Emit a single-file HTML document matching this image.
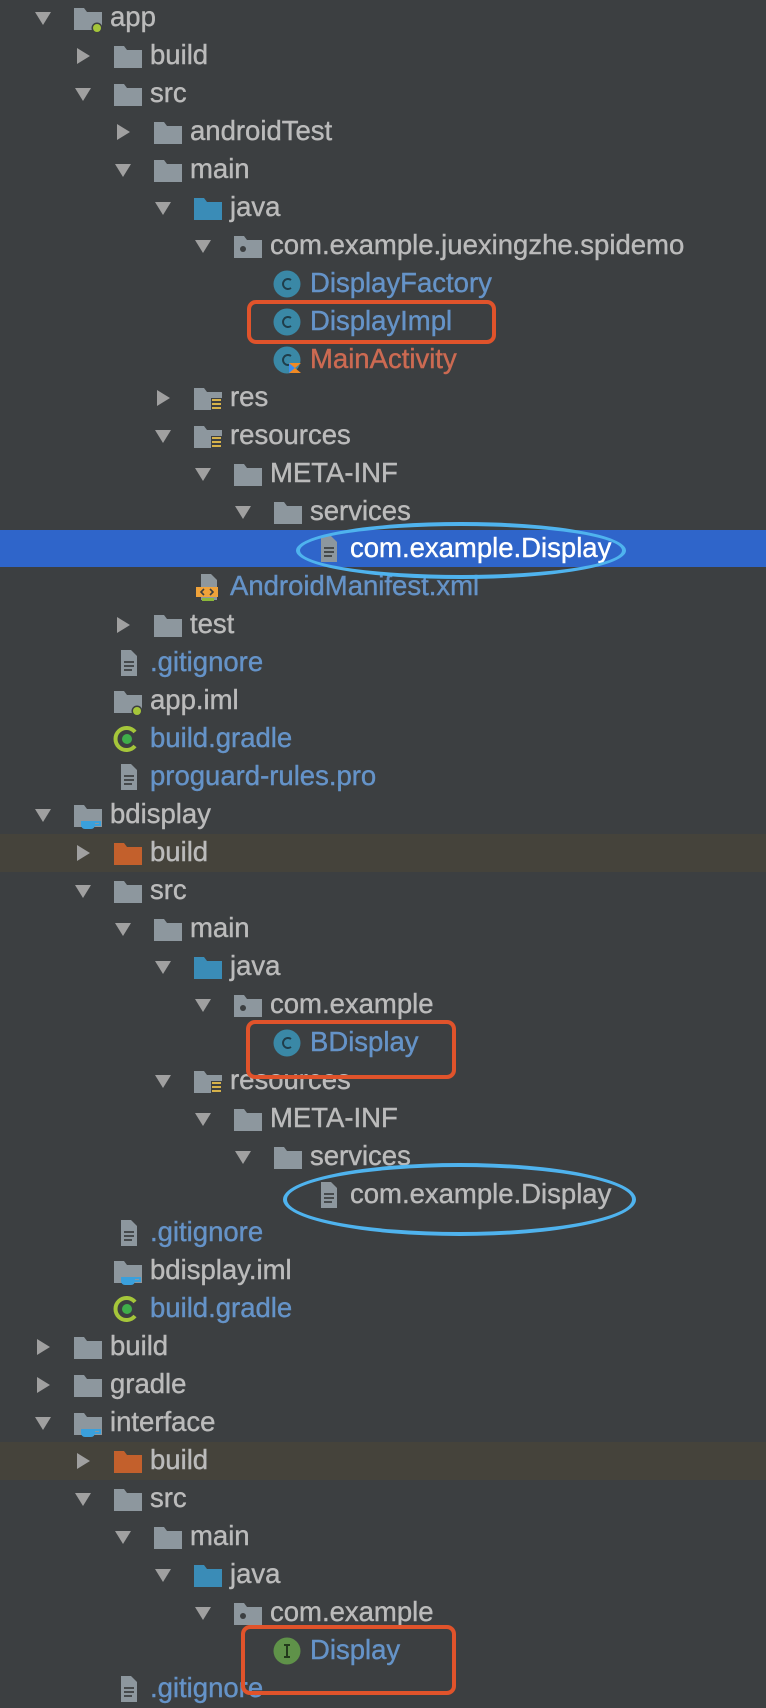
<!DOCTYPE html>
<html><head><meta charset="utf-8">
<style>
html,body{margin:0;padding:0;background:#3c3f41;}
body{width:766px;height:1678px;overflow:hidden;position:relative;font-family:"Liberation Sans",Arial,sans-serif;}
.r{position:absolute;left:0;width:766px;height:38px;}
.hl{background:#45433b;}
.sel{background:#2f65ca;}
.a{position:absolute;top:11px;width:18px;height:16px;}
.i{position:absolute;top:5px;width:30px;height:28px;}
.t{position:absolute;top:0;line-height:36px;font-size:27.5px;color:#bbbbbb;white-space:nowrap;-webkit-text-stroke:0.4px currentColor;}
.b{color:#6593c8}.rd{color:#cc6a52}.w{color:#ffffff}
.box{position:absolute;border:4px solid #e0532b;border-radius:9px;box-sizing:border-box;}
.ell{position:absolute;border:4px solid #4fb3ee;border-radius:50%;box-sizing:border-box;}
</style></head><body>
<svg width="0" height="0" style="position:absolute">
<defs>
<symbol id="dn" viewBox="0 0 18 16"><path d="M1 2h16L9 15z" fill="#a0a0a0"/></symbol>
<symbol id="rt" viewBox="0 0 18 16"><path d="M3 0v16l13-8z" fill="#a0a0a0"/></symbol>
<symbol id="fd" viewBox="0 0 30 28"><path d="M1 4h10l3 4h15v18H1z" fill="#8d979e"/></symbol>
<symbol id="fj" viewBox="0 0 30 28"><path d="M1 4h10l3 4h15v18H1z" fill="#3a8cb7"/></symbol>
<symbol id="fo" viewBox="0 0 30 28"><path d="M1 4h10l3 4h15v18H1z" fill="#c3602c"/></symbol>
<symbol id="pk" viewBox="0 0 30 28"><path d="M1 4h10l3 4h15v18H1z" fill="#8d979e"/><circle cx="10" cy="17" r="3" fill="#3c3f41"/></symbol>
<symbol id="rs" viewBox="0 0 30 28"><path d="M1 4h10l3 4h15v18H1z" fill="#8d979e"/><rect x="18" y="14" width="11" height="14" fill="#3c3f41"/><path d="M19 16h9M19 20h9M19 24h9" stroke="#d6b24a" stroke-width="2"/></symbol>
<symbol id="mg" viewBox="0 0 30 28"><path d="M1 4h10l3 4h15v18H1z" fill="#8d979e"/><circle cx="24" cy="24" r="5.5" fill="#3c3f41"/><circle cx="24" cy="24" r="4" fill="#a5c63a"/></symbol>
<symbol id="mc" viewBox="0 0 30 28"><path d="M1 4h10l3 4h15v18H1z" fill="#8d979e"/><path d="M8 20h14v4a4 4 0 0 1-4 4h-6a4 4 0 0 1-4-4z" fill="#3aa0dc"/><path d="M22 21h5v3h-5" fill="none" stroke="#3aa0dc" stroke-width="2"/></symbol>
<symbol id="fl" viewBox="0 0 30 28"><path d="M8 1h10l6 6v20H8z" fill="#8d979e"/><path d="M11 13h10M11 17h10M11 21h8" stroke="#3c3f41" stroke-width="1.8"/></symbol>
<symbol id="gr" viewBox="0 0 30 28"><path d="M22 7a11 11 0 1 0 0 14" fill="none" stroke="#a5c63a" stroke-width="4"/><circle cx="14" cy="14" r="5" fill="#3fae4a"/></symbol>
<symbol id="cl" viewBox="0 0 30 28"><circle cx="14" cy="14" r="13.5" fill="#3a88a6"/><path d="M18 10a5 5 0 1 0 0 8" fill="none" stroke="#1f3d4a" stroke-width="2"/></symbol>
<symbol id="kc" viewBox="0 0 30 28"><circle cx="14" cy="14" r="13.5" fill="#3a88a6"/><path d="M18 10a5 5 0 1 0 0 8" fill="none" stroke="#1f3d4a" stroke-width="2"/><path d="M16 17h12l-6 5 6 5H16z" fill="#f08a24"/><path d="M16 27l6-5-6-5z" fill="#3a8cf0"/></symbol>
<symbol id="if" viewBox="0 0 30 28"><circle cx="14" cy="14" r="13.5" fill="#5f9249"/><path d="M11 8h6M14 8v12M11 20h6" stroke="#233a1c" stroke-width="2"/></symbol>
<symbol id="mf" viewBox="0 0 30 28"><path d="M8 1h10l6 6v20H8z" fill="#8d979e"/><rect x="3" y="14" width="22" height="10" fill="#f0a33a"/><path d="M11 16l-3 3 3 3M17 16l3 3-3 3" stroke="#3c3f41" stroke-width="1.6" fill="none"/><path d="M9 25h12v3H9z" fill="#8cb83a"/></symbol>
</defs></svg>

<div class="r" style="top:-1px"><svg class="a" style="left:34px"><use href="#dn"/></svg><svg class="i" style="left:73px"><use href="#mg"/></svg><span class="t" style="left:110px">app</span></div>
<div class="r" style="top:37px"><svg class="a" style="left:74px"><use href="#rt"/></svg><svg class="i" style="left:113px"><use href="#fd"/></svg><span class="t" style="left:150px">build</span></div>
<div class="r" style="top:75px"><svg class="a" style="left:74px"><use href="#dn"/></svg><svg class="i" style="left:113px"><use href="#fd"/></svg><span class="t" style="left:150px">src</span></div>
<div class="r" style="top:113px"><svg class="a" style="left:114px"><use href="#rt"/></svg><svg class="i" style="left:153px"><use href="#fd"/></svg><span class="t" style="left:190px">androidTest</span></div>
<div class="r" style="top:151px"><svg class="a" style="left:114px"><use href="#dn"/></svg><svg class="i" style="left:153px"><use href="#fd"/></svg><span class="t" style="left:190px">main</span></div>
<div class="r" style="top:189px"><svg class="a" style="left:154px"><use href="#dn"/></svg><svg class="i" style="left:193px"><use href="#fj"/></svg><span class="t" style="left:230px">java</span></div>
<div class="r" style="top:227px"><svg class="a" style="left:194px"><use href="#dn"/></svg><svg class="i" style="left:233px"><use href="#pk"/></svg><span class="t" style="left:270px">com.example.juexingzhe.spidemo</span></div>
<div class="r" style="top:265px"><svg class="i" style="left:273px"><use href="#cl"/></svg><span class="t b" style="left:310px">DisplayFactory</span></div>
<div class="r" style="top:303px"><svg class="i" style="left:273px"><use href="#cl"/></svg><span class="t b" style="left:310px">DisplayImpl</span></div>
<div class="r" style="top:341px"><svg class="i" style="left:273px"><use href="#kc"/></svg><span class="t rd" style="left:310px">MainActivity</span></div>
<div class="r" style="top:379px"><svg class="a" style="left:154px"><use href="#rt"/></svg><svg class="i" style="left:193px"><use href="#rs"/></svg><span class="t" style="left:230px">res</span></div>
<div class="r" style="top:417px"><svg class="a" style="left:154px"><use href="#dn"/></svg><svg class="i" style="left:193px"><use href="#rs"/></svg><span class="t" style="left:230px">resources</span></div>
<div class="r" style="top:455px"><svg class="a" style="left:194px"><use href="#dn"/></svg><svg class="i" style="left:233px"><use href="#fd"/></svg><span class="t" style="left:270px">META-INF</span></div>
<div class="r" style="top:493px"><svg class="a" style="left:234px"><use href="#dn"/></svg><svg class="i" style="left:273px"><use href="#fd"/></svg><span class="t" style="left:310px">services</span></div>
<div class="r sel" style="top:530px;height:37px"><svg class="i" style="left:313px"><use href="#fl"/></svg><span class="t w" style="left:350px">com.example.Display</span></div>
<div class="r" style="top:568px"><svg class="i" style="left:193px"><use href="#mf"/></svg><span class="t b" style="left:230px">AndroidManifest.xml</span></div>
<div class="r" style="top:606px"><svg class="a" style="left:114px"><use href="#rt"/></svg><svg class="i" style="left:153px"><use href="#fd"/></svg><span class="t" style="left:190px">test</span></div>
<div class="r" style="top:644px"><svg class="i" style="left:113px"><use href="#fl"/></svg><span class="t b" style="left:150px">.gitignore</span></div>
<div class="r" style="top:682px"><svg class="i" style="left:113px"><use href="#mg"/></svg><span class="t" style="left:150px">app.iml</span></div>
<div class="r" style="top:720px"><svg class="i" style="left:113px"><use href="#gr"/></svg><span class="t b" style="left:150px">build.gradle</span></div>
<div class="r" style="top:758px"><svg class="i" style="left:113px"><use href="#fl"/></svg><span class="t b" style="left:150px">proguard-rules.pro</span></div>
<div class="r" style="top:796px"><svg class="a" style="left:34px"><use href="#dn"/></svg><svg class="i" style="left:73px"><use href="#mc"/></svg><span class="t" style="left:110px">bdisplay</span></div>
<div class="r hl" style="top:834px"><svg class="a" style="left:74px"><use href="#rt"/></svg><svg class="i" style="left:113px"><use href="#fo"/></svg><span class="t" style="left:150px">build</span></div>
<div class="r" style="top:872px"><svg class="a" style="left:74px"><use href="#dn"/></svg><svg class="i" style="left:113px"><use href="#fd"/></svg><span class="t" style="left:150px">src</span></div>
<div class="r" style="top:910px"><svg class="a" style="left:114px"><use href="#dn"/></svg><svg class="i" style="left:153px"><use href="#fd"/></svg><span class="t" style="left:190px">main</span></div>
<div class="r" style="top:948px"><svg class="a" style="left:154px"><use href="#dn"/></svg><svg class="i" style="left:193px"><use href="#fj"/></svg><span class="t" style="left:230px">java</span></div>
<div class="r" style="top:986px"><svg class="a" style="left:194px"><use href="#dn"/></svg><svg class="i" style="left:233px"><use href="#pk"/></svg><span class="t" style="left:270px">com.example</span></div>
<div class="r" style="top:1024px"><svg class="i" style="left:273px"><use href="#cl"/></svg><span class="t b" style="left:310px">BDisplay</span></div>
<div class="r" style="top:1062px"><svg class="a" style="left:154px"><use href="#dn"/></svg><svg class="i" style="left:193px"><use href="#rs"/></svg><span class="t" style="left:230px">resources</span></div>
<div class="r" style="top:1100px"><svg class="a" style="left:194px"><use href="#dn"/></svg><svg class="i" style="left:233px"><use href="#fd"/></svg><span class="t" style="left:270px">META-INF</span></div>
<div class="r" style="top:1138px"><svg class="a" style="left:234px"><use href="#dn"/></svg><svg class="i" style="left:273px"><use href="#fd"/></svg><span class="t" style="left:310px">services</span></div>
<div class="r" style="top:1176px"><svg class="i" style="left:313px"><use href="#fl"/></svg><span class="t" style="left:350px">com.example.Display</span></div>
<div class="r" style="top:1214px"><svg class="i" style="left:113px"><use href="#fl"/></svg><span class="t b" style="left:150px">.gitignore</span></div>
<div class="r" style="top:1252px"><svg class="i" style="left:113px"><use href="#mc"/></svg><span class="t" style="left:150px">bdisplay.iml</span></div>
<div class="r" style="top:1290px"><svg class="i" style="left:113px"><use href="#gr"/></svg><span class="t b" style="left:150px">build.gradle</span></div>
<div class="r" style="top:1328px"><svg class="a" style="left:34px"><use href="#rt"/></svg><svg class="i" style="left:73px"><use href="#fd"/></svg><span class="t" style="left:110px">build</span></div>
<div class="r" style="top:1366px"><svg class="a" style="left:34px"><use href="#rt"/></svg><svg class="i" style="left:73px"><use href="#fd"/></svg><span class="t" style="left:110px">gradle</span></div>
<div class="r" style="top:1404px"><svg class="a" style="left:34px"><use href="#dn"/></svg><svg class="i" style="left:73px"><use href="#mc"/></svg><span class="t" style="left:110px">interface</span></div>
<div class="r hl" style="top:1442px"><svg class="a" style="left:74px"><use href="#rt"/></svg><svg class="i" style="left:113px"><use href="#fo"/></svg><span class="t" style="left:150px">build</span></div>
<div class="r" style="top:1480px"><svg class="a" style="left:74px"><use href="#dn"/></svg><svg class="i" style="left:113px"><use href="#fd"/></svg><span class="t" style="left:150px">src</span></div>
<div class="r" style="top:1518px"><svg class="a" style="left:114px"><use href="#dn"/></svg><svg class="i" style="left:153px"><use href="#fd"/></svg><span class="t" style="left:190px">main</span></div>
<div class="r" style="top:1556px"><svg class="a" style="left:154px"><use href="#dn"/></svg><svg class="i" style="left:193px"><use href="#fj"/></svg><span class="t" style="left:230px">java</span></div>
<div class="r" style="top:1594px"><svg class="a" style="left:194px"><use href="#dn"/></svg><svg class="i" style="left:233px"><use href="#pk"/></svg><span class="t" style="left:270px">com.example</span></div>
<div class="r" style="top:1632px"><svg class="i" style="left:273px"><use href="#if"/></svg><span class="t b" style="left:310px">Display</span></div>
<div class="r" style="top:1670px"><svg class="i" style="left:113px"><use href="#fl"/></svg><span class="t b" style="left:150px">.gitignore</span></div>

<div class="box" style="left:247px;top:300px;width:249px;height:44px"></div>
<div class="box" style="left:246px;top:1020px;width:210px;height:59px"></div>
<div class="box" style="left:241px;top:1625px;width:215px;height:70px"></div>
<div class="ell" style="left:296px;top:522px;width:330px;height:57px"></div>
<div class="ell" style="left:283px;top:1163px;width:353px;height:73px"></div>
</body></html>
